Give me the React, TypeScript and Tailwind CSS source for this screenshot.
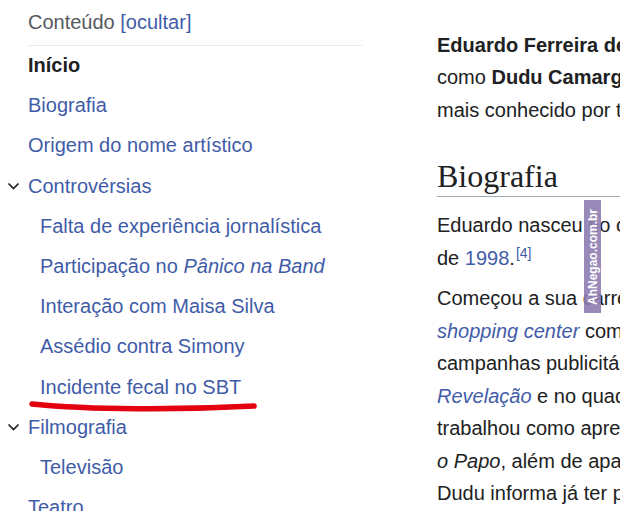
const link = "text-[#3f5ca8]";

type TocItem = { label: React.ReactNode; level: 1 | 2; chevron?: boolean; bold?: boolean };

const toc: TocItem[] = [
  { label: "Início", level: 1, bold: true },
  { label: "Biografia", level: 1 },
  { label: "Origem do nome artístico", level: 1 },
  { label: "Controvérsias", level: 1, chevron: true },
  { label: "Falta de experiência jornalística", level: 2 },
  {
    label: (
      <>
        Participação no <i>Pânico na Band</i>
      </>
    ),
    level: 2,
  },
  { label: "Interação com Maisa Silva", level: 2 },
  { label: "Assédio contra Simony", level: 2 },
  { label: "Incidente fecal no SBT", level: 2 },
  { label: "Filmografia", level: 1, chevron: true },
  { label: "Televisão", level: 2 },
  { label: "Teatro", level: 1 },
];

function Chevron() {
  return (
    <svg
      className="absolute -left-[21px] top-[16px] text-[#202122]"
      width="13"
      height="8"
      viewBox="0 0 13 8"
      fill="none"
    >
      <polyline points="1.5,1.5 6.5,6.5 11.5,1.5" stroke="currentColor" strokeWidth="1.7" />
    </svg>
  );
}

function Toc() {
  return (
    <aside className="w-[362px] shrink-0 pl-[28px] text-[20px]">
      <div className="h-[46px] border-b border-[#eaecf0] pt-[2px] leading-[40px] text-[#54595d]">
        Conteúdo <span className={link}>[ocultar]</span>
      </div>
      <ul className="-mt-[1px]">
        {toc.map((item, i) => (
          <li
            key={i}
            className={`relative h-[40.2px] whitespace-nowrap leading-[40.2px] ${
              item.level === 2 ? "pl-[12px]" : ""
            } ${item.bold ? "font-bold text-[#202122]" : link}`}
          >
            {item.chevron && <Chevron />}
            {item.label}
          </li>
        ))}
      </ul>
    </aside>
  );
}

function Line({ children }: { children: React.ReactNode }) {
  return <div className="h-[32.5px] whitespace-nowrap leading-[32.5px]">{children}</div>;
}

function Article() {
  return (
    <main className="min-w-0 flex-1 overflow-hidden pt-[28.75px] text-[20px] text-[#202122]">
      <div>
        <Line>
          <b>Eduardo Ferreira de Camargo</b> (São Paulo, 13 de maio de 1998)
        </Line>
        <Line>
          como <b>Dudu Camargo</b>, é um apresentador brasileiro
        </Line>
        <Line>mais conhecido por ter apresentado o Primeiro Impacto</Line>
      </div>

      <h2 className="mt-[29.5px] h-[41px] border-b border-[#a2a9b1] font-['Liberation_Serif',serif] text-[32px] leading-[40px]">
        Biografia
      </h2>

      <div className="mt-[12.5px]">
        <Line>Eduardo nasceu no centro de São Paulo, em 13 de maio</Line>
        <Line>
          de <span className={link}>1998</span>.
          <sup className={`${link} ml-[1px] text-[14px]`}>[4]</sup>
        </Line>
      </div>

      <div className="mt-[8px]">
        <Line>Começou a sua carreira como modelo, posando em um</Line>
        <Line>
          <i className={link}>shopping center</i> como garoto-propaganda em
        </Line>
        <Line>campanhas publicitárias, participou do Programa</Line>
        <Line>
          <i className={link}>Revelação</i> e no quadro de calouros onde
        </Line>
        <Line>trabalhou como apresentador mirim do Bom Dia</Line>
        <Line>
          <i>o Papo</i>, além de aparecer em programas locais.
        </Line>
        <Line>Dudu informa já ter participado de outros testes</Line>
      </div>
    </main>
  );
}

export default function App() {
  return (
    <div className="relative h-[511px] w-[620px] overflow-hidden bg-white font-['Liberation_Sans',Arial,sans-serif]">
      <div className="flex">
        <Toc />
        <div className="w-[75px] shrink-0" />
        <Article />
      </div>

      <svg className="pointer-events-none absolute left-0 top-0" width="620" height="511">
        <path
          d="M32 404 C 90 410, 180 410, 254 406"
          fill="none"
          stroke="#e3000f"
          strokeWidth="5.5"
          strokeLinecap="round"
        />
      </svg>

      <div className="absolute left-[584px] top-[200px] flex h-[113px] w-[17px] items-center justify-center bg-[#8d7cb0]/90">
        <span className="-rotate-90 whitespace-nowrap text-[12px] font-bold leading-none text-white">
          AhNegao.com.br
        </span>
      </div>
    </div>
  );
}
